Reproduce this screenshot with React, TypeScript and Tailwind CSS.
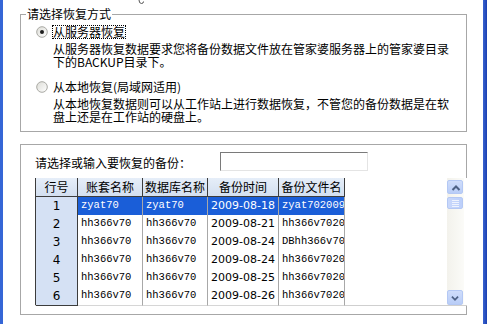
import React from "react";

const cjk = "font-['Noto_Sans_CJK_SC',sans-serif]";

function Radio({ checked }: { checked: boolean }) {
  return (
    <svg width="12" height="12" viewBox="0 0 12 12" className="shrink-0">
      <defs>
        <linearGradient id={checked ? "rg1" : "rg2"} x1="0" y1="0" x2="1" y2="1">
          <stop offset="0" stopColor="#dcdcd6" />
          <stop offset="1" stopColor="#ffffff" />
        </linearGradient>
      </defs>
      <circle cx="6" cy="6" r="5.3" fill={`url(#${checked ? "rg1" : "rg2"})`} stroke="#a9a9a4" strokeWidth="1" />
      {checked && <circle cx="6" cy="6" r="2" fill="#1e1e1e" />}
    </svg>
  );
}

function Chevron({ up }: { up: boolean }) {
  return (
    <svg width="16" height="14" viewBox="0 0 16 14">
      <polyline
        points={up ? "4.5,9 8,5.5 11.5,9" : "4.5,5.5 8,9 11.5,5.5"}
        fill="none"
        stroke="#4d6185"
        strokeWidth="2"
      />
    </svg>
  );
}

const rows = [
  { n: "1", a: "zyat70", b: "zyat70", d: "2009-08-18", f: "zyat7020090818.bak", sel: true },
  { n: "2", a: "hh366v70", b: "hh366v70", d: "2009-08-21", f: "hh366v7020090821.bak", sel: false },
  { n: "3", a: "hh366v70", b: "hh366v70", d: "2009-08-24", f: "DBhh366v7020090824", sel: false },
  { n: "4", a: "hh366v70", b: "hh366v70", d: "2009-08-24", f: "hh366v7020100824", sel: false },
  { n: "5", a: "hh366v70", b: "hh366v70", d: "2009-08-25", f: "hh366v7020100825", sel: false },
  { n: "6", a: "hh366v70", b: "hh366v70", d: "2009-08-26", f: "hh366v7020100826", sel: false },
];

export default function App() {
  const mono = "font-['Liberation_Mono',monospace] text-[10.5px]";
  const sans = "font-['DejaVu_Sans',sans-serif] text-[11px]";
  return (
    <div className="w-[487px] h-[324px] flex overflow-hidden bg-white text-black">
      <div className="w-[3px] h-full bg-[#3566d6]" />
      <div className="relative flex-1 flex flex-col pl-[17px] pt-[14px]">
        <svg className="absolute left-[134px] top-0" width="8" height="5" viewBox="0 0 8 5">
          <path d="M2 0 Q2 3.5 4.5 3.5 Q6.5 3.5 6.5 1.5" fill="none" stroke="#555" strokeWidth="1" />
        </svg>

        {/* Group box 1 */}
        <div className={`relative w-[447px] h-[118px] border border-[#a7a7a7] pt-[10px] ${cjk} text-[12px] leading-[12.5px]`}>
          <div className="absolute left-[5px] top-[-8px] bg-white px-[1px] leading-[14px]">请选择恢复方式</div>
          <div className="flex items-center pl-[15px] gap-[4px]">
            <Radio checked />
            <div className="border border-dotted border-black px-0 leading-[12px] h-[14px] flex items-center">从服务器恢复</div>
          </div>
          <div className="pl-[32px] mt-[4px]">
            <div className="whitespace-nowrap">从服务器恢复数据要求您将备份数据文件放在管家婆服务器上的管家婆目录</div>
            <div className="whitespace-nowrap">下的BACKUP目录下。</div>
          </div>
          <div className="flex items-center pl-[15px] gap-[4px] mt-[12px] h-[14px]">
            <Radio checked={false} />
            <div className="pl-[1px]">从本地恢复(局域网适用)</div>
          </div>
          <div className="pl-[32px] mt-[4px]">
            <div className="whitespace-nowrap">从本地恢复数据则可以从工作站上进行数据恢复，不管您的备份数据是在软</div>
            <div className="whitespace-nowrap">盘上还是在工作站的硬盘上。</div>
          </div>
        </div>

        {/* Group box 2 */}
        <div className={`mt-[12px] w-[447px] h-[171px] border border-[#a7a7a7] pt-[7px] pl-[14px] ${cjk} text-[12px]`}>
          <div className="flex items-center h-[19px]">
            <div className="w-[185px] leading-[12px] mt-[2px]">请选择或输入要恢复的备份：</div>
            <div className="w-[148px] h-[19px] border-t border-l border-t-[#7a7a7a] border-l-[#7a7a7a] border-b border-r border-b-[#e4e4e4] border-r-[#e4e4e4] bg-white" />
          </div>

          <div className="mt-[7px] w-[432px] h-[128px] flex bg-white border-b border-[#cfcfcf] relative">
            <div className="border-l border-[#3c3c3c] flex flex-col">
              <div className="grid grid-cols-[42px_65px_65px_71px_66px] h-[19px]">
                {["行号", "账套名称", "数据库名称", "备份时间", "备份文件名"].map((h) => (
                  <div
                    key={h}
                    className="flex items-center justify-center bg-gradient-to-b from-[#e6eef9] to-[#d3dff0] border-r border-b border-[#3c3c3c] leading-[12px] whitespace-nowrap overflow-hidden"
                  >
                    {h}
                  </div>
                ))}
              </div>
              {rows.map((r) => (
                <div key={r.n} className="grid grid-cols-[42px_65px_65px_71px_66px] h-[18px]">
                  <div className={`flex items-center justify-center bg-[#d5e1f4] border-r border-b border-[#3c3c3c] ${sans} text-[12px]`}>
                    {r.n}
                  </div>
                  <div className={`flex items-center pl-[3px] whitespace-nowrap overflow-hidden border-r border-r-[#a8a8a8] border-b border-b-[#d6d6d6] ${mono} ${r.sel ? "bg-[#1a5ed8] text-white" : "bg-white"}`}>
                    {r.a}
                  </div>
                  <div className={`flex items-center pl-[3px] whitespace-nowrap overflow-hidden border-r border-r-[#a8a8a8] border-b border-b-[#d6d6d6] ${mono} ${r.sel ? "bg-[#1a5ed8] text-white" : "bg-white"}`}>
                    {r.b}
                  </div>
                  <div className={`flex items-center pl-[3px] whitespace-nowrap overflow-hidden border-r border-r-[#a8a8a8] border-b border-b-[#d6d6d6] ${sans} ${r.sel ? "bg-[#1a5ed8] text-white" : "bg-white"}`}>
                    {r.d}
                  </div>
                  <div className={`flex items-center pl-[3px] whitespace-nowrap overflow-hidden border-r border-r-[#a8a8a8] border-b border-b-[#d6d6d6] ${mono} ${r.sel ? "bg-[#1a5ed8] text-white" : "bg-white"}`}>
                    {r.f}
                  </div>
                </div>
              ))}
            </div>
            <div className="flex-1" />
            <div className="w-[17px] mr-[3px] flex flex-col pt-[2px] bg-gradient-to-r from-[#f3f2ec] to-[#fbfbf8]">
              <div className="w-[16px] h-[14px] rounded-[2px] bg-gradient-to-b from-[#cfddfb] to-[#b9cdf7] border border-[#b4c8f4]">
                <Chevron up />
              </div>
              <div className="w-[16px] h-[12px] mt-[3px] rounded-[2px] bg-gradient-to-r from-[#c9d8fb] to-[#bccffa] border border-[#b4c8f4] flex flex-col items-center justify-center gap-[1px]">
                <div className="w-[7px] h-[1px] bg-[#eef3fe]" />
                <div className="w-[7px] h-[1px] bg-[#eef3fe]" />
                <div className="w-[7px] h-[1px] bg-[#eef3fe]" />
                <div className="w-[7px] h-[1px] bg-[#eef3fe]" />
              </div>
              <div className="mt-auto w-[16px] h-[15px] rounded-[2px] bg-gradient-to-b from-[#cfddfb] to-[#b9cdf7] border border-[#b4c8f4] flex items-center">
                <Chevron up={false} />
              </div>
            </div>
          </div>
        </div>
      </div>
      <div className="w-[4px] h-full bg-gradient-to-r from-[#3a63d0] to-[#1a3fb0]" />
    </div>
  );
}
